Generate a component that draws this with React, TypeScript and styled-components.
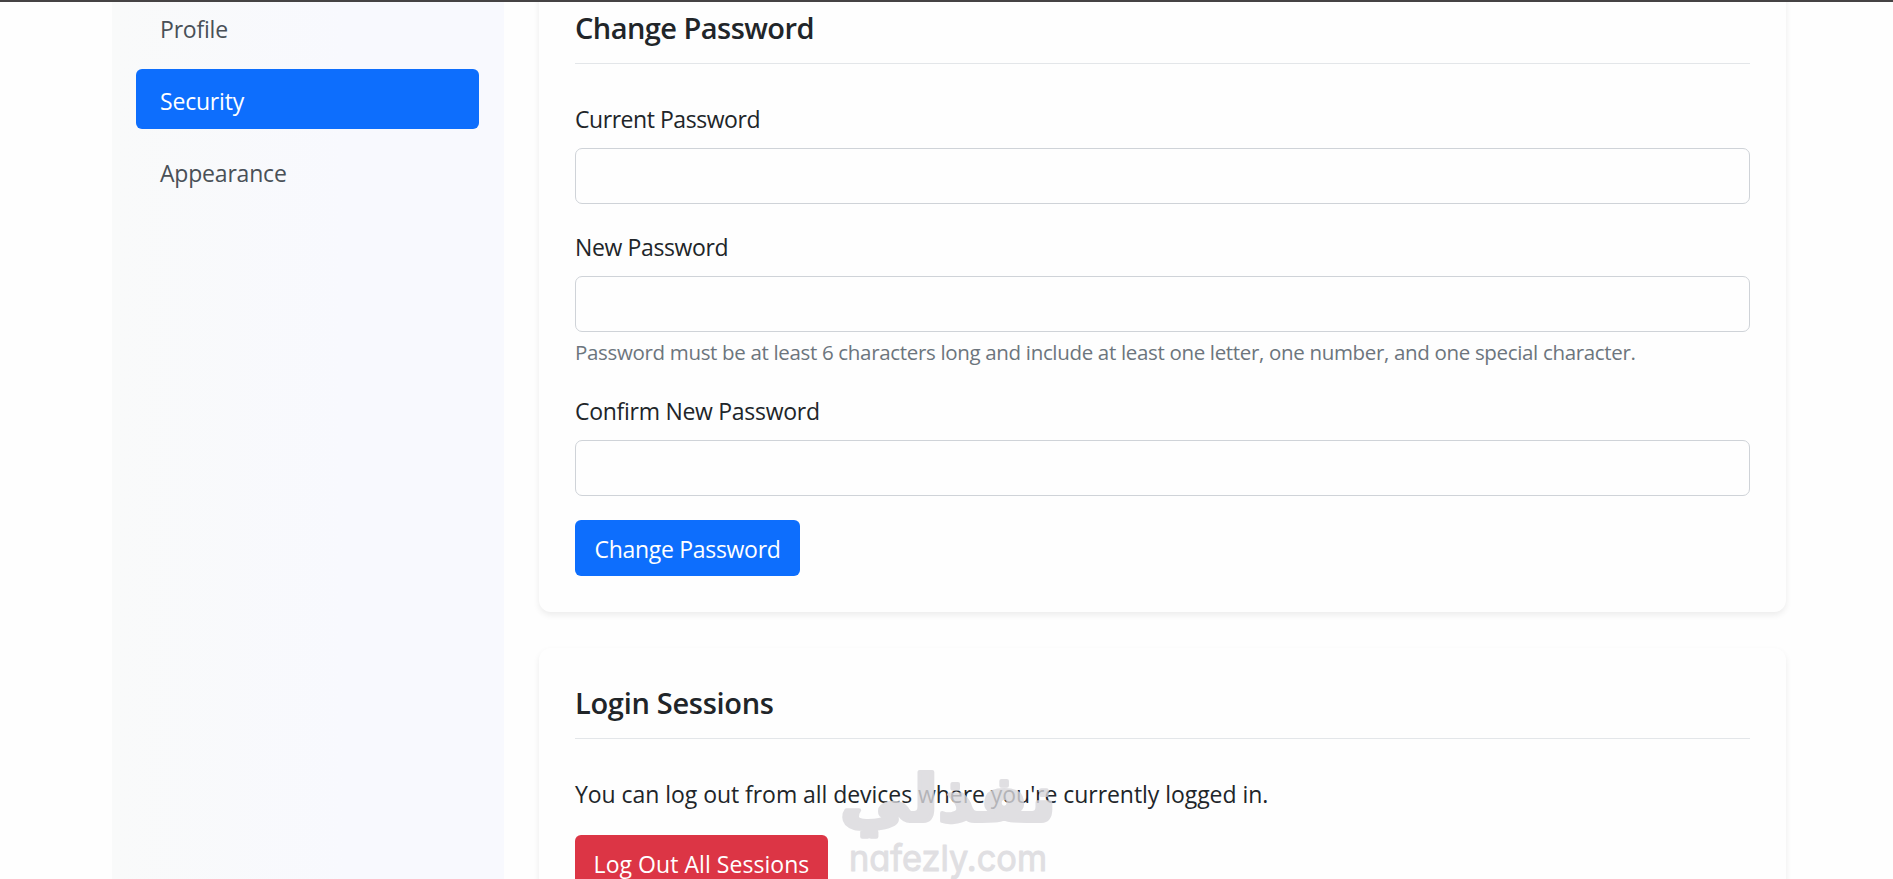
import { FC, FormEvent } from "react";
import styled, { createGlobalStyle } from "styled-components";

interface IField {
  id: string;
  label: string;
  tracking: number;
  hint?: string;
}

const menu = [
  { title: "Profile", tracking: -0.2 },
  { title: "Security", tracking: -0.2, active: true },
  { title: "Appearance", tracking: -0.2 },
];

const fields: IField[] = [
  { id: "current", label: "Current Password", tracking: -0.45 },
  {
    id: "new",
    label: "New Password",
    tracking: -0.37,
    hint: "Password must be at least 6 characters long and include at least one letter, one number, and one special character.",
  },
  { id: "confirm", label: "Confirm New Password", tracking: -0.28 },
];

const Watermark: FC = () => (
  <WatermarkStyle viewBox="0 0 230 119" aria-hidden="true">
    <text
      className="arabic"
      x="116"
      y="61"
      textAnchor="middle"
      textLength="216"
      lengthAdjust="spacingAndGlyphs"
    >
      نفذلي
    </text>
    <text
      className="latin"
      x="17"
      y="111"
      textLength="198"
      lengthAdjust="spacingAndGlyphs"
    >
      nafezly.com
    </text>
  </WatermarkStyle>
);

const App: FC = () => {
  const handleSubmit = (e: FormEvent) => {
    e.preventDefault();
  };

  return (
    <>
      <GlobalStyle />
      <PageStyle>
        <TopLine />
        <ContentStyle>
          <Sidebar>
            {menu.map((item) => (
              <MenuLink
                key={item.title}
                href="#"
                $active={item.active}
                $tracking={item.tracking}
              >
                {item.title}
              </MenuLink>
            ))}
          </Sidebar>

          <MainStyle>
            <Card>
              <CardTitle $tracking={-0.55}>Change Password</CardTitle>
              <form onSubmit={handleSubmit}>
                {fields.map((field) => (
                  <FieldStyle key={field.id}>
                    <Label htmlFor={field.id} $tracking={field.tracking}>
                      {field.label}
                    </Label>
                    <Input id={field.id} type="password" />
                    {field.hint && <Hint>{field.hint}</Hint>}
                  </FieldStyle>
                ))}
                <Button type="submit" $width={225} $tracking={-0.3}>
                  Change Password
                </Button>
              </form>
            </Card>

            <Card>
              <CardTitle $tracking={-0.3}>Login Sessions</CardTitle>
              <Text>
                You can log out from all devices where you're currently logged
                in.
              </Text>
              <Button type="button" $danger $width={253} $tracking={0.05}>
                Log Out All Sessions
              </Button>
            </Card>
          </MainStyle>
        </ContentStyle>
        <Watermark />
      </PageStyle>
    </>
  );
};

const GlobalStyle = createGlobalStyle`
  * {
    box-sizing: border-box;
  }
  body {
    margin: 0;
    background: #fefefe;
    color: #212529;
    font-family: "Open Sans", "Noto Sans", sans-serif;
    font-size: 23px;
    line-height: 36px;
  }
`;

const PageStyle = styled.div`
  position: relative;
  height: 879px;
  overflow: hidden;
`;

const TopLine = styled.div`
  position: relative;
  z-index: 2;
  height: 2px;
  background: #454344;
`;

// the page is scrolled a little, so the first card starts above the window
const ContentStyle = styled.div`
  display: flex;
  gap: 35px;
  margin-top: -29px;
  padding: 0 107px 0 112px;
`;

const Sidebar = styled.nav`
  display: flex;
  flex-direction: column;
  flex: 0 0 392px;
  gap: 12px;
  padding: 24px 25px 24px 24px;
  background: linear-gradient(to right, #f9fafa, #f8f9fe 60%);
`;

const MenuLink = styled.a<{ $active?: boolean; $tracking: number }>`
  height: 60px;
  padding: 14px 24px 10px;
  border-radius: 6px;
  background: ${({ $active }) => ($active ? "#0d6efd" : "transparent")};
  color: ${({ $active }) => ($active ? "#fff" : "#495057")};
  letter-spacing: ${({ $tracking }) => $tracking}px;
  text-decoration: none;
`;

const MainStyle = styled.main`
  display: flex;
  flex-direction: column;
  flex: 1;
  gap: 36px;
`;

const Card = styled.section`
  padding: 36px;
  border-radius: 12px;
  background: #fefefe;
  box-shadow: 0 3px 6px rgba(0, 0, 0, 0.075);
`;

const CardTitle = styled.h4<{ $tracking: number }>`
  height: 55px;
  margin: 0 0 36px;
  padding-top: 1px;
  border-bottom: 1px solid #e3e6e9;
  font-size: 29px;
  font-weight: 600;
  letter-spacing: ${({ $tracking }) => $tracking}px;
`;

const FieldStyle = styled.div`
  margin-bottom: 24px;
`;

const Label = styled.label<{ $tracking: number }>`
  display: block;
  height: 36px;
  margin-bottom: 12px;
  padding-top: 1px;
  letter-spacing: ${({ $tracking }) => $tracking}px;
`;

const Input = styled.input`
  display: block;
  width: 100%;
  height: 56px;
  padding: 9px 18px;
  border: 1px solid #cfd3d8;
  border-radius: 7px;
  background: #fefefe;
  font: inherit;
`;

const Hint = styled.div`
  height: 36px;
  padding-top: 4px;
  color: #6c757d;
  font-size: 20.5px;
  line-height: 32px;
  letter-spacing: -0.33px;
  white-space: nowrap;
`;

const Text = styled.p`
  height: 36px;
  margin: 0 0 24px;
  padding-top: 1px;
  letter-spacing: -0.05px;
`;

const Button = styled.button<{
  $danger?: boolean;
  $width: number;
  $tracking: number;
}>`
  display: block;
  width: ${({ $width }) => $width}px;
  height: 56px;
  padding: 2px 0 0;
  border: 0;
  border-radius: 6px;
  background: ${({ $danger }) => ($danger ? "#dc3545" : "#0d6efd")};
  color: #fff;
  font: inherit;
  letter-spacing: ${({ $tracking }) => $tracking}px;
`;

const WatermarkStyle = styled.svg`
  position: absolute;
  left: 832px;
  top: 760px;
  width: 230px;
  height: 119px;
  opacity: 0.8;
  fill: #d9d8dc;
  stroke: #d9d8dc;
  stroke-linejoin: round;
  pointer-events: none;

  .arabic {
    font-family: "DejaVu Sans", sans-serif;
    font-size: 64px;
    font-weight: 700;
    stroke-width: 4px;
  }

  .latin {
    font-family: Inter, sans-serif;
    font-size: 36px;
    font-weight: 400;
    font-feature-settings: "cv11";
    stroke-width: 1px;
  }
`;

export default App;
